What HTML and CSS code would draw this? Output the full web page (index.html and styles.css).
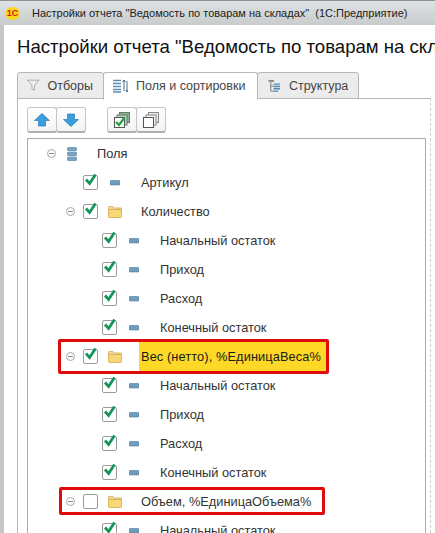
FILE: index.html
```html
<!DOCTYPE html>
<html lang="ru">
<head>
    <meta charset="UTF-8">
    <title>Настройки отчета</title>
    <link rel="stylesheet" href="styles.css">
</head>
<body>
    <svg class="sprites" width="0" height="0">
        <symbol id="ic-field" viewBox="0 0 10 6">
            <rect x="0" y="0.5" width="10" height="4.5" rx="1" fill="#6f9dbd" stroke="#4f7d9d" stroke-width="0.6"/>
        </symbol>
        <symbol id="ic-fields" viewBox="0 0 10 14">
            <rect x="0.4" y="0.4" width="9.2" height="3.4" rx="1" fill="#7ba5c2" stroke="#4f7d9d" stroke-width="0.7"/>
            <rect x="0.4" y="5.3" width="9.2" height="3.4" rx="1" fill="#7ba5c2" stroke="#4f7d9d" stroke-width="0.7"/>
            <rect x="0.4" y="10.2" width="9.2" height="3.4" rx="1" fill="#7ba5c2" stroke="#4f7d9d" stroke-width="0.7"/>
        </symbol>
        <symbol id="ic-folder" viewBox="0 0 14 12">
            <path d="M0.5 2.5 L0.5 1.2 Q0.5 0.5 1.2 0.5 L5 0.5 L6 2 L13 2 Q13.5 2 13.5 2.5 L13.5 4 L0.5 4 Z" fill="#f0d9a0" stroke="#d3a94f" stroke-width="0.8"/>
            <rect x="0.5" y="3.5" width="13" height="8" rx="0.8" fill="#f8d777" stroke="#d3a94f" stroke-width="0.8"/>
        </symbol>
        <symbol id="ic-check" viewBox="0 0 15 15">
            <path d="M3 6.5 L6.6 10.5 L12.5 1.5" fill="none" stroke="#14955a" stroke-width="2.8"/>
        </symbol>
    </svg>

    <div class="titlebar">
        <span class="logo">1С</span>
        <span class="titlebar-text">Настройки отчета "Ведомость по товарам на складах"&nbsp; (1С:Предприятие)</span>
    </div>

    <div class="window">
        <h1 class="form-title">Настройки отчета "Ведомость по товарам на складах"</h1>

        <div class="tabs">
            <div class="tab tab-filters">
                <svg width="14" height="13" viewBox="0 0 14 13"><path d="M0.5 0.5 H13.5 L8.5 6 V12 L5.5 10.5 V6 Z" fill="#eef0f0" stroke="#a3a8aa"/></svg>
                Отборы
            </div>
            <div class="tab tab-active">
                <svg width="15" height="14" viewBox="0 0 15 14">
                    <path d="M0 1.5 H8 M0 4.5 H8 M0 7.5 H8 M0 10.5 H8 M0 13 H8" stroke="#5c8db0" stroke-width="1.5"/>
                    <path d="M11 12 V1 M9.5 3 L11 1 L12.5 3 M14 2 V13 M12.8 11 L14 13 L15 11" fill="none" stroke="#47708c" stroke-width="1"/>
                </svg>
                Поля и сортировки
            </div>
            <div class="tab tab-structure">
                <svg width="13" height="14" viewBox="0 0 14 14">
                    <path d="M3 2 V12.5 H6 M3 7 H6" fill="none" stroke="#777"/>
                    <rect x="0.5" y="0.5" width="6" height="2" fill="#888"/>
                    <path d="M6 5 H13 M6 7.5 H13 M6 10 H13 M6 12.5 H11" stroke="#4e8ab8" stroke-width="1.5"/>
                </svg>
                Структура
            </div>
        </div>

        <div class="panel">
            <div class="toolbar">
                <div class="btn-group">
                    <button class="btn">
                        <svg width="16" height="14" viewBox="0 0 16 14"><path d="M8 0.5 L15.5 7.5 H11.5 V13 H4.5 V7.5 H0.5 Z" fill="#3b9ede" stroke="#2a7db5" stroke-width="0.7"/></svg>
                    </button>
                    <button class="btn">
                        <svg width="16" height="14" viewBox="0 0 16 14"><path d="M8 13.5 L15.5 6.5 H11.5 V1 H4.5 V6.5 H0.5 Z" fill="#3b9ede" stroke="#2a7db5" stroke-width="0.7"/></svg>
                    </button>
                </div>
                <div class="btn-group">
                    <button class="btn">
                        <svg width="16" height="16" viewBox="0 0 16 16">
                            <rect x="5.5" y="0.5" width="10" height="10" fill="#8cae97" stroke="#5d7f68"/>
                            <rect x="3" y="3" width="10" height="10" fill="#bcd0c2" stroke="#5d7f68"/>
                            <rect x="0.5" y="5.5" width="10" height="10" fill="#fff" stroke="#555"/>
                            <path d="M2 10 L5 13 L10.5 5.5" fill="none" stroke="#1fa33f" stroke-width="2.2"/>
                        </svg>
                    </button>
                    <button class="btn">
                        <svg width="16" height="16" viewBox="0 0 16 16">
                            <rect x="5.5" y="0.5" width="10" height="10" fill="#e8e8e8" stroke="#888"/>
                            <rect x="3" y="3" width="10" height="10" fill="#f2f2f2" stroke="#888"/>
                            <rect x="0.5" y="5.5" width="10" height="10" fill="#fff" stroke="#555"/>
                        </svg>
                    </button>
                </div>
            </div>

            <div class="tree" id="tree"></div>
        </div>
    </div>

    <script>
        const rows = [
            { level: 0, icon: 'fields', text: 'Поля', toggle: true },
            { level: 1, icon: 'field', text: 'Артикул', checked: true },
            { level: 1, icon: 'folder', text: 'Количество', toggle: true, checked: true },
            { level: 2, icon: 'field', text: 'Начальный остаток', checked: true },
            { level: 2, icon: 'field', text: 'Приход', checked: true },
            { level: 2, icon: 'field', text: 'Расход', checked: true },
            { level: 2, icon: 'field', text: 'Конечный остаток', checked: true },
            { level: 1, icon: 'folder', text: 'Вес (нетто), %ЕдиницаВеса%', toggle: true, checked: true, mark: 'mark-weight', selected: true },
            { level: 2, icon: 'field', text: 'Начальный остаток', checked: true },
            { level: 2, icon: 'field', text: 'Приход', checked: true },
            { level: 2, icon: 'field', text: 'Расход', checked: true },
            { level: 2, icon: 'field', text: 'Конечный остаток', checked: true },
            { level: 1, icon: 'folder', text: 'Объем, %ЕдиницаОбъема%', toggle: true, checked: false, mark: 'mark-volume' },
            { level: 2, icon: 'field', text: 'Начальный остаток', checked: true }
        ];

        let tree = document.getElementById('tree');

        rows.forEach(r => {
            let row = document.createElement('div');
            row.className = `tree-row level-${r.level}`;

            let html = `<span class="toggle">${r.toggle ? '<i></i>' : ''}</span>`;
            if (r.level > 0) {
                html += `<span class="checkbox">${r.checked ? '<svg width="15" height="15"><use href="#ic-check"/></svg>' : ''}</span>`;
            }
            html += `<span class="node-icon"><svg class="icon-${r.icon}"><use href="#ic-${r.icon}"/></svg></span>`;
            html += `<span class="node-text${r.selected ? ' node-selected' : ''}">${r.text}</span>`;
            if (r.mark) html += `<span class="mark ${r.mark}"></span>`;

            row.innerHTML = html;
            tree.appendChild(row);
        });
    </script>
</body>
</html>
```

FILE: styles.css
```css
* {
    box-sizing: border-box;
}

html, body {
    height: 100%;
}

body {
    margin: 0;
    overflow: hidden;
    display: flex;
    flex-direction: column;
    font-family: "Liberation Sans", Arial, sans-serif;
    color: #333;
    background: #fff;
}

.sprites {
    position: absolute;
}

.titlebar {
    flex: none;
    height: 25px;
    display: flex;
    align-items: center;
    padding-left: 5px;
    border-top: 1px solid #8f9294;
    background: linear-gradient(#dfe3e4, #c9cbcc);
    color: #222;
    font-size: 11px;
}

.logo {
    width: 15px;
    height: 13px;
    margin-right: 12px;
    border-radius: 50%;
    background: #f9d71c;
    color: #d8201c;
    font-size: 9px;
    font-weight: bold;
    line-height: 13px;
    text-align: center;
}

.titlebar-text {
    white-space: nowrap;
}

.window {
    flex: 1;
    min-height: 0;
    padding: 10px 0 0 13px;
    border-left: 4px solid #c4c6c7;
    display: flex;
    flex-direction: column;
    overflow: hidden;
}

.form-title {
    margin: 0 0 13px;
    font-size: 18.6px;
    font-weight: normal;
    line-height: 24px;
    color: #111;
    white-space: nowrap;
}

.tabs {
    display: flex;
    height: 27px;
    margin-bottom: -1px;
    position: relative;
    font-size: 12.5px;
    color: #444;
}

.tab {
    display: flex;
    align-items: center;
    gap: 8px;
    padding: 0 10px 0 9px;
    border: 1px solid #b5b7b8;
    border-radius: 3px 3px 0 0;
    background: #ececec;
    white-space: nowrap;
}

.tab + .tab {
    margin-left: -1px;
}

.tab-filters {
    width: 87px;
}

.tab-structure {
    padding-left: 10px;
}

.tab-active {
    width: 155px;
    background: #fff;
    border-bottom-color: #fff;
    height: 28px;
    padding-bottom: 1px;
    z-index: 1;
}

.panel {
    flex: 1;
    min-height: 0;
    margin-right: 4px;
    padding: 8px 4px 0 9px;
    border-top: 1px solid #b5b7b8;
    border-left: 1px solid #b5b7b8;
    border-right: 1px dashed #ccc;
    display: flex;
    flex-direction: column;
}

.toolbar {
    display: flex;
    gap: 21px;
    height: 26px;
    margin-bottom: 5px;
}

.btn-group {
    display: flex;
}

.btn {
    width: 30px;
    height: 26px;
    padding: 0;
    display: flex;
    align-items: center;
    justify-content: center;
    border: 1px solid #c3c5c6;
    border-bottom: 2px solid #aeb0b1;
    border-radius: 3px;
    background: linear-gradient(#fff, #f3f3f3);
}

.btn + .btn {
    margin-left: -1px;
}

.tree {
    flex: 1;
    min-height: 0;
    border: 1px solid #a9abac;
    border-bottom: 0;
    overflow: hidden;
    font-size: 12.8px;
}

.tree-row {
    position: relative;
    height: 29px;
    display: flex;
    align-items: center;
}

.toggle {
    width: 9px;
    height: 9px;
    flex: none;
}

.toggle i {
    display: block;
    width: 9px;
    height: 9px;
    border: 1px solid #a8a8a8;
    border-radius: 50%;
    position: relative;
}

.toggle i::after {
    content: "";
    position: absolute;
    left: 1px;
    right: 1px;
    top: 3px;
    height: 1px;
    background: #888;
}

.checkbox {
    flex: none;
    width: 15px;
    height: 15px;
    border: 1px solid #9b9b9b;
    border-radius: 2px;
    background: #fff;
    position: relative;
}

.checkbox svg {
    position: absolute;
    left: -1px;
    top: -3px;
}

.node-icon {
    flex: none;
    display: flex;
    align-items: center;
    justify-content: center;
}

.icon-field {
    width: 10px;
    height: 6px;
}

.icon-fields {
    width: 10px;
    height: 14px;
}

.icon-folder {
    width: 14px;
    height: 12px;
}

.node-text {
    white-space: nowrap;
    color: #333;
}

.node-selected {
    align-self: stretch;
    display: flex;
    align-items: center;
    width: 187px;
    padding-left: 2px;
    letter-spacing: 0.1px;
    background: #fdd827;
    color: #1a1a1a;
}

/* offsets inside each level, measured from the tree's left edge */
.level-0 {
    padding-left: 19px;
}

.level-0 .node-icon {
    margin-left: 11px;
    width: 10px;
}

.level-0 .node-text {
    margin-left: 20px;
}

.level-1 {
    padding-left: 38px;
}

.level-1 .checkbox {
    margin-left: 8px;
}

.level-1 .node-icon {
    margin-left: 10px;
    width: 14px;
}

.level-1 .node-text {
    margin-left: 19px;
}

.level-1 .node-selected {
    margin-left: 17px;
}

.level-2 {
    padding-left: 65px;
}

.level-2 .toggle {
    display: none;
}

.level-2 .checkbox {
    margin-left: 9px;
}

.level-2 .node-icon {
    margin-left: 12px;
    width: 10px;
}

.level-2 .node-text {
    margin-left: 21px;
}

/* red frames drawn over the rows */
.mark {
    position: absolute;
    border: 3px solid #e00b0b;
    border-radius: 2px;
    pointer-events: none;
}

.mark-weight {
    left: 30px;
    width: 271px;
    top: -3px;
    height: 35px;
}

.mark-volume {
    left: 31px;
    width: 266px;
    top: 0;
    height: 28px;
}
```
